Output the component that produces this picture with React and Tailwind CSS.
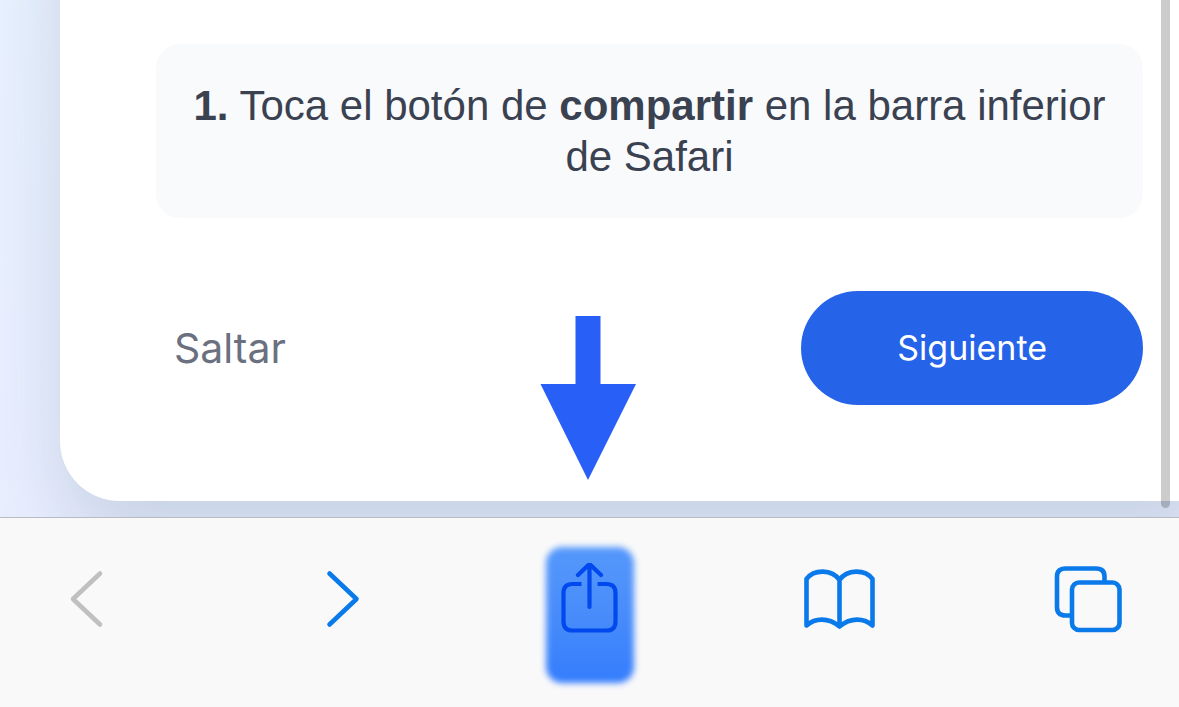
function ToolbarButton({ label, disabled = false, children }) {
  return (
    <button
      type="button"
      aria-label={label}
      disabled={disabled}
      className="relative flex h-18 w-18 items-center justify-center text-[#0a7aea] disabled:text-[#c0c0c0]"
    >
      {children}
    </button>
  );
}

function Icon({ children }) {
  return (
    <svg
      viewBox="0 0 72 72"
      className="relative size-18"
      fill="none"
      stroke="currentColor"
      strokeWidth="4.6"
      strokeLinecap="round"
      strokeLinejoin="round"
      aria-hidden="true"
    >
      {children}
    </svg>
  );
}

function InstallCard() {
  return (
    <section className="-mt-20 ml-15 rounded-bl-[60px] bg-white pt-31 pr-9 pb-24 pl-24 shadow-[16px_28px_72px_16px_rgba(20,60,90,0.15)]">
      <p className="rounded-3xl bg-[#f9fafc] px-8 py-9 text-center text-[42px] leading-[51px] text-[#3a4150]">
        <strong>1.</strong> Toca el botón de <strong>compartir</strong> en la barra inferior de Safari
      </p>
      <div className="mt-[73px] flex items-center justify-between font-['Inter',sans-serif]">
        <button type="button" className="px-[18px] py-6 text-[41px] leading-[51px] text-[#6b7080]">
          Saltar
        </button>
        <button
          type="button"
          className="rounded-full bg-[#2563e9] px-24 py-8 text-[34px] leading-[50px] text-white"
        >
          Siguiente
        </button>
      </div>
    </section>
  );
}

function ShareArrow() {
  return (
    <svg
      viewBox="0 0 96 164"
      className="pointer-events-none absolute bottom-[227px] left-1/2 w-24 max-w-none -translate-x-1/2 overflow-visible"
      fill="#285ff7"
      aria-hidden="true"
    >
      <path d="M33.500 0H58.500V68H94L46 164L-1.500 68H33.500Z" />
    </svg>
  );
}

function BrowserToolbar() {
  return (
    <nav
      aria-label="Safari"
      className="relative flex justify-between border-t border-[#b9bbc2] bg-[#f9f9f9] px-[53px] pt-[45px] pb-18"
    >
      <ToolbarButton label="Atrás" disabled>
        <Icon>
          <path d="M47 10.500L20 36L47 61.500" />
        </Icon>
      </ToolbarButton>
      <ToolbarButton label="Adelante">
        <Icon>
          <path d="M26.500 10.500L53.500 36L26.500 61.500" />
        </Icon>
      </ToolbarButton>
      <ToolbarButton label="Compartir">
        <span className="absolute -top-4 -bottom-12 -left-2 w-22 rounded-2xl bg-linear-to-b from-[#5598fb] via-[#488cfb] to-[#347dfd] blur-[3px]" />
        <svg
          viewBox="0 0 72 72"
          className="relative size-18"
          fill="none"
          stroke="#0148ee"
          strokeWidth="4.2"
          strokeLinecap="round"
          strokeLinejoin="round"
          aria-hidden="true"
        >
          <path d="M35.500 44V1M24 12L35.500 1L47 12" />
          <path strokeLinecap="butt" d="M27.500 21H18.500Q9.500 21 9.500 30V58.500Q9.500 67.500 18.500 67.500H52.500Q61.500 67.500 61.500 58.500V30Q61.500 21 52.500 21H43.500" />
        </svg>
      </ToolbarButton>
      <ToolbarButton label="Marcadores">
        <Icon>
          <path d="M35.500 17C28 6 10 6 2.500 16V62.500C11 55 24 54 35.500 63.500C47 54 60 55 68.500 62.500V16C61 6 43 6 35.500 17V63" />
        </Icon>
      </ToolbarButton>
      <ToolbarButton label="Pestañas">
        <Icon>
          <rect x="18" y="19.500" width="47.500" height="47.500" rx="7" />
          <path strokeLinecap="butt" d="M18 52.500H11.500Q3 52.500 3 44V13.500Q3 5.500 11.500 5.500H42Q50.500 5.500 50.500 13.500V19" />
        </Icon>
      </ToolbarButton>
      <ShareArrow />
    </nav>
  );
}

export default function App() {
  return (
    <div className="flex min-h-screen flex-col bg-[#f9f9f9] font-['Liberation_Sans',Arial,sans-serif]">
      <main className="relative grow overflow-hidden bg-linear-to-b from-[#e8f1fe] to-[#e9eeff] pb-4">
        <InstallCard />
        <div className="absolute top-0 right-[9px] bottom-[9px] w-[9px] rounded-b-full bg-black/20" />
      </main>
      <BrowserToolbar />
    </div>
  );
}
